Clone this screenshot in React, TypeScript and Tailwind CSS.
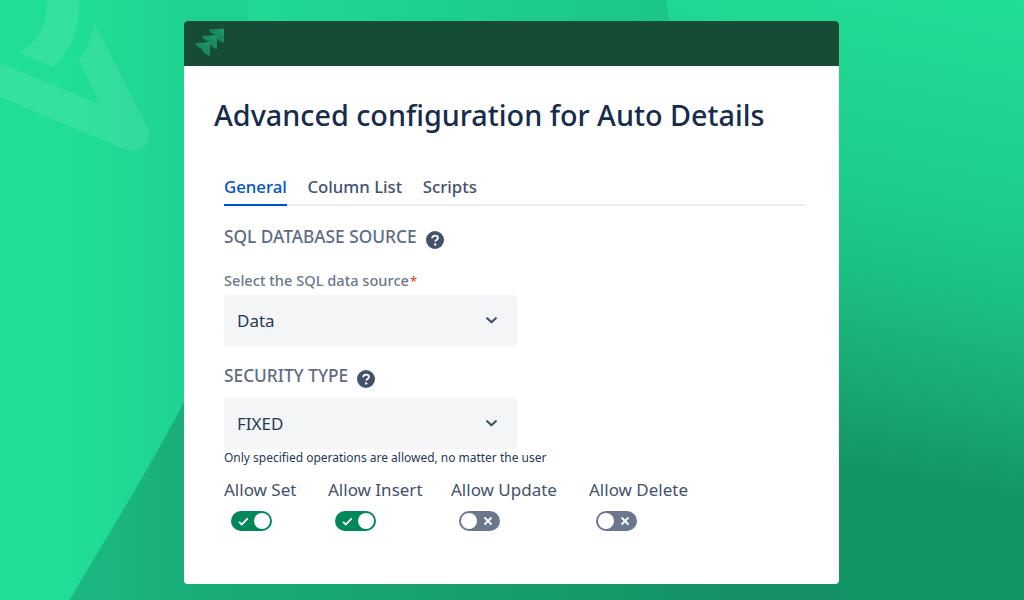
import React from 'react';

const Help = () => (
  <svg width="18" height="18" viewBox="0 0 18 18" className="shrink-0 mt-[4px]">
    <circle cx="9" cy="9" r="9" fill="#42526E" />
    <path d="M6.2 7.3c0-1.6 1.2-2.7 2.9-2.7s2.8 1 2.8 2.3c0 2-2.7 2-2.7 3.7" fill="none" stroke="#fff" strokeWidth="1.9" />
    <circle cx="9.2" cy="13.4" r="1.2" fill="#fff" />
  </svg>
);

const Chevron = () => (
  <svg width="11" height="7" viewBox="0 0 11 7">
    <path d="M1.2 1.2 5.5 5.3l4.3-4.1" fill="none" stroke="#42526E" strokeWidth="2.2" strokeLinecap="round" strokeLinejoin="round" />
  </svg>
);

const Select = ({ value }: { value: string }) => (
  <div className="w-[293px] h-[51px] rounded-[4px] bg-[#F4F5F7] pl-[13px] pr-[20px] flex items-center justify-between">
    <span className="text-[17px] text-[#253858]">{value}</span>
    <Chevron />
  </div>
);

const Toggle = ({ on }: { on: boolean }) =>
  on ? (
    <div className="w-[41px] h-[20px] rounded-full bg-[#00875A] flex items-center justify-between pl-[7px] pr-[2px]">
      <svg width="11" height="9" viewBox="0 0 11 9">
        <path d="M1 4.8 3.8 7.4 9.8 1.4" fill="none" stroke="#fff" strokeWidth="1.8" />
      </svg>
      <div className="w-[16px] h-[16px] rounded-full bg-white" />
    </div>
  ) : (
    <div className="w-[41px] h-[20px] rounded-full bg-[#6B778C] flex items-center justify-between pl-[2px] pr-[7px]">
      <div className="w-[16px] h-[16px] rounded-full bg-white" />
      <svg width="10" height="10" viewBox="0 0 10 10">
        <path d="M1.5 1.5l7 7M8.5 1.5l-7 7" stroke="#fff" strokeWidth="1.8" />
      </svg>
    </div>
  );

const toggles = [
  { label: 'Allow Set', on: true, width: 'w-[104px]', inset: 'pl-[7px]' },
  { label: 'Allow Insert', on: true, width: 'w-[123px]', inset: 'pl-[7px]' },
  { label: 'Allow Update', on: false, width: 'w-[138px]', inset: 'pl-[8px]' },
  { label: 'Allow Delete', on: false, width: 'w-[110px]', inset: 'pl-[7px]' },
];

const Background = () => (
  <svg className="absolute inset-0" width="1024" height="600" viewBox="0 0 1024 600">
    <defs>
      <linearGradient id="base" gradientUnits="userSpaceOnUse" x1="1024" y1="0" x2="904" y2="600">
        <stop offset="0" stopColor="#20DE96" />
        <stop offset="0.35" stopColor="#1DCC8B" />
        <stop offset="0.5" stopColor="#1BBE82" />
        <stop offset="0.67" stopColor="#18A873" />
        <stop offset="0.8" stopColor="#149565" />
        <stop offset="1" stopColor="#149565" />
      </linearGradient>
      <linearGradient id="left" gradientUnits="userSpaceOnUse" x1="70" y1="0" x2="190" y2="0">
        <stop offset="0" stopColor="#20DE96" />
        <stop offset="1" stopColor="#1ED38F" />
      </linearGradient>
      <linearGradient id="top" gradientUnits="userSpaceOnUse" x1="248" y1="0" x2="670" y2="0">
        <stop offset="0" stopColor="#1FD993" />
        <stop offset="1" stopColor="#1BC588" />
      </linearGradient>
      <linearGradient id="bottom" gradientUnits="userSpaceOnUse" x1="100" y1="0" x2="750" y2="0">
        <stop offset="0" stopColor="#1CB780" />
        <stop offset="0.13" stopColor="#1AAE78" />
        <stop offset="0.62" stopColor="#179E6C" />
        <stop offset="1" stopColor="#149165" />
      </linearGradient>
    </defs>
    <rect width="1024" height="600" fill="url(#base)" />
    <path d="M70 600C97 553 157 457 190 390H400V600Z M400 584H840V600H400Z" fill="url(#bottom)" />
    <path d="M0 0H248V30H190V390C157 457 97 553 70 600H0Z" fill="url(#left)" />
    <path d="M248 0H666L671 30H248Z" fill="url(#top)" />
    <path d="M47 0h32C80 30 70 52 53 67L19 53C38 42 48 24 47 0Z" fill="#fff" fillOpacity="0.09" />
    <path d="M94 22C92 36 87 50 79 61L101 105 0 63V97L124 149C140 155 154 142 148 128Z" fill="#fff" fillOpacity="0.09" />
  </svg>
);

const Logo = () => {
  const piece = 'M14 1.5 29 0.5V14.5C25 13.5 21.5 11 20.5 7 17.5 6.5 15 4.5 14 1.5Z';
  return (
    <svg width="30" height="28" viewBox="0 0 30 28">
      <defs>
        <linearGradient id="logo" x1="1" y1="0" x2="0" y2="1">
          <stop offset="0" stopColor="#1F9A68" />
          <stop offset="0.6" stopColor="#178358" />
          <stop offset="1" stopColor="#0F6B47" />
        </linearGradient>
      </defs>
      <path d={piece} fill="url(#logo)" />
      <path d={piece} transform="translate(-7 6.5)" fill="url(#logo)" />
      <path d={piece} transform="translate(-14 13.5)" fill="url(#logo)" />
    </svg>
  );
};

export default function App() {
  return (
    <div className="relative w-[1024px] h-[600px] overflow-hidden font-['Noto_Sans',sans-serif]">
      <Background />

      <div className="relative ml-[184px] mt-[21px] w-[655px] h-[563px] rounded-[4px] bg-white overflow-hidden">
        <div className="h-[45px] bg-[#164B35] pl-[11px] pt-[7px]">
          <Logo />
        </div>

        <div className="pl-[30px]">
          <h1 className="pt-[28px] text-[28.75px] leading-[42px] font-medium text-[#172B4D]">Advanced configuration for Auto Details</h1>

          <div className="ml-[10px] mt-[31px] w-[581px]">
            <div className="flex gap-[20.5px] h-[39px] border-b-2 border-[#EBECF0] text-[16.8px] font-medium text-[#42526E]">
              <div className="h-[39px] border-b-2 border-[#0052CC] text-[#0052CC] pt-[8px] leading-[24px]">General</div>
              <div className="pt-[8px] leading-[24px]">Column List</div>
              <div className="pt-[8px] leading-[24px]">Scripts</div>
            </div>

            <div className="mt-[19px] flex items-center gap-[9px] h-[26px]">
              <span className="pb-[2px] text-[17.3px] font-medium text-[#5E6C84]">SQL DATABASE SOURCE</span>
              <Help />
            </div>
            <div className="mt-[20px] h-[19px] text-[14.6px] leading-[19px] font-medium text-[#6B778C]">
              Select the SQL data source<span className="ml-[1px] text-[13px] font-normal text-[#DE350B]">*</span>
            </div>
            <div className="mt-[5px]">
              <Select value="Data" />
            </div>

            <div className="mt-[18px] flex items-center gap-[9px] h-[26px]">
              <span className="pb-[2px] text-[17.3px] font-medium text-[#5E6C84]">SECURITY TYPE</span>
              <Help />
            </div>
            <div className="mt-[8px]">
              <Select value="FIXED" />
            </div>
            <div className="mt-[1px] text-[11.97px] leading-[15px] text-[#253858]">Only specified operations are allowed, no matter the user</div>

            <div className="mt-[14px] flex">
              {toggles.map((t) => (
                <div key={t.label} className={t.width}>
                  <div className="text-[17px] leading-[22px] text-[#42526E]">{t.label}</div>
                  <div className={`mt-[10px] ${t.inset}`}>
                    <Toggle on={t.on} />
                  </div>
                </div>
              ))}
            </div>
          </div>
        </div>
      </div>
    </div>
  );
}
